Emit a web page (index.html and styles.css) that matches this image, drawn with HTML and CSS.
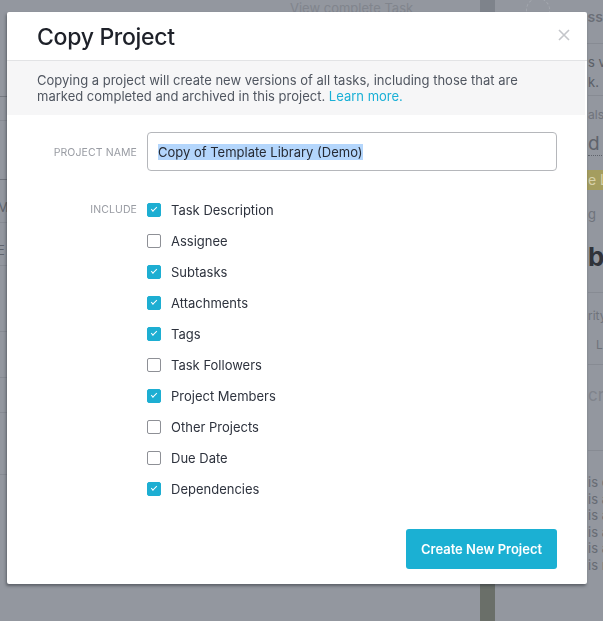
FILE: index.html
```html
<!DOCTYPE html>
<html lang="en">
<head>
    <meta charset="UTF-8">
    <meta name="viewport" content="width=device-width, initial-scale=1.0">
    <title>Copy Project</title>
    <link rel="stylesheet" href="styles.css">
</head>
<body>
    <div class="app">
        <div class="main">
            <div class="topbar"><span class="topbar_text">View complete Task</span></div>
            <div class="row row-a"></div>
            <div class="row row-b"></div>
            <div class="row row-c"><span>M</span></div>
            <div class="row row-d"><span>E</span></div>
            <div class="row row-e"></div>
            <div class="row row-f"></div>
            <div class="row row-g"></div>
            <div class="row row-h"></div>
        </div>
        <div class="strip"></div>
        <div class="side">
            <div class="side_block side_top"><span class="side_avatar"></span><span>ss</span></div>
            <div class="side_block side_desc">s v<br>k.</div>
            <div class="side_block side_als">als</div>
            <div class="side_block side_due"><span>d n</span></div>
            <div class="side_block side_tag">e L</div>
            <div class="side_block side_g">g</div>
            <div class="side_block side_big">b</div>
            <div class="side_block side_prio">rity<br><span>L</span></div>
            <div class="side_block side_crit">cri</div>
            <div class="side_block side_list">is c<br>is a<br>is a<br>is a<br>is a<br>is n</div>
        </div>
    </div>

    <div class="overlay">
        <div class="modal">
            <div class="modal_header">
                <h1 class="modal_title">Copy Project</h1>
                <svg class="modal_close" width="12" height="12" viewBox="0 0 12 12">
                    <path d="M1 1 L11 11 M11 1 L1 11" stroke="#c4c6ca" stroke-width="1.6" fill="none"/>
                </svg>
            </div>
            <div class="modal_info">
                Copying a project will create new versions of all tasks, including those that are
                marked completed and archived in this project. <a class="learn-more" href="#">Learn more.</a>
            </div>
            <div class="form">
                <div class="form_row">
                    <div class="form_label form_label-name">PROJECT NAME</div>
                    <div class="name-input"><span class="name-input_selected">Copy of Template Library (Demo)</span></div>
                </div>
                <div class="form_row form_row-include">
                    <div class="form_label form_label-include">INCLUDE</div>
                    <ul class="options">
                        <li class="option"><span class="check checked"></span>Task Description</li>
                        <li class="option"><span class="check"></span>Assignee</li>
                        <li class="option"><span class="check checked"></span>Subtasks</li>
                        <li class="option"><span class="check checked"></span>Attachments</li>
                        <li class="option"><span class="check checked"></span>Tags</li>
                        <li class="option"><span class="check"></span>Task Followers</li>
                        <li class="option"><span class="check checked"></span>Project Members</li>
                        <li class="option"><span class="check"></span>Other Projects</li>
                        <li class="option"><span class="check"></span>Due Date</li>
                        <li class="option"><span class="check checked"></span>Dependencies</li>
                    </ul>
                </div>
            </div>
            <div class="modal_footer">
                <button class="create_btn">Create New Project</button>
            </div>
        </div>
    </div>
</body>
</html>
```
FILE: styles.css
```css
        body {
            margin: 0;
            background-color: #93979f;
            font-family: Inter, "Liberation Sans", sans-serif;
            overflow: hidden;
        }
        .app {
            display: flex;
            height: 621px;
            color: #6b6f77;
        }
        .main {
            flex: 1;
        }
        .topbar {
            height: 96px;
            padding-left: 290px;
            font-size: 13px;
            line-height: 16px;
            color: #81858d;
            overflow: hidden;
            border-bottom: 1px solid #767a82;
        }
        .row {
            border-bottom: 1px solid #878b93;
            font-size: 13px;
            color: #60646c;
        }
        .row-a { height: 23px; }
        .row-b { height: 58px; border-bottom-color: #6f737b; }
        .row-c { height: 42px; }
        .row-c span, .row-d span { display: block; margin-left: -3px; padding-top: 19px; }
        .row-d { height: 42px; }
        .row-e { height: 65px; }
        .row-f { height: 45px; }
        .row-g { height: 34px; }
        .row-h { height: 61px; }
        .strip {
            width: 15px;
            background: linear-gradient(#7e838b 0, #7e838b 12px, #8e9299 12px, #8e9299 580px, #6a6f69 580px);
        }
        .side {
            width: 108px;
            padding-left: 93px;
            box-sizing: border-box;
            overflow: hidden;
            white-space: nowrap;
            font-size: 13px;
        }
        .side_block {
            border-bottom: 1px solid transparent;
        }
        .side_top {
            height: 43px;
            margin-left: -93px;
            padding-left: 31px;
            display: flex;
            align-items: flex-start;
            font-weight: 600;
            font-size: 14px;
            line-height: 18px;
            border-bottom-color: #878b93;
        }
        .side_avatar {
            width: 22px;
            height: 22px;
            margin-top: -2px;
            border: 1px dashed #a3a7ae;
            border-radius: 50%;
            margin-right: 38px;
        }
        .side_top span:last-child {
            padding-top: 8px;
        }
        .side_desc {
            height: 43px;
            padding-top: 8px;
            line-height: 20px;
            color: #5a5e66;
            border-bottom-color: #878b93;
        }
        .side_als {
            height: 20px;
            padding-top: 12px;
            line-height: 14px;
            font-size: 12px;
            color: #6f737b;
        }
        .side_due {
            height: 28px;
            padding-top: 4px;
            font-size: 19px;
            line-height: 22px;
            color: #5f636b;
        }
        .side_due span {
            border-bottom: 1px dotted #5f636b;
        }
        .side_tag {
            height: 19px;
            margin-top: 8px;
            margin-left: -5px;
            padding-left: 5px;
            line-height: 19px;
            background-color: #a49d5f;
            color: #d7d1a9;
            font-size: 14px;
        }
        .side_g {
            height: 29px;
            padding-top: 14px;
            line-height: 20px;
            color: #6f737b;
        }
        .side_big {
            height: 50px;
            padding-top: 8px;
            font-size: 26px;
            line-height: 30px;
            font-weight: 700;
            color: #30333a;
            border-bottom-color: #878b93;
        }
        .side_prio {
            height: 63px;
            padding-top: 8px;
            line-height: 29px;
            font-size: 12px;
            color: #6f737b;
            border-bottom-color: #878b93;
        }
        .side_prio span { padding-left: 8px; }
        .side_crit {
            height: 67px;
            padding-top: 18px;
            font-size: 17px;
            line-height: 24px;
            color: #80848c;
            border-bottom-color: #878b93;
        }
        .side_list {
            padding-top: 23px;
            line-height: 16.6px;
            color: #676b73;
        }
        .overlay {
            position: fixed;
            top: 0;
            left: 0;
            right: 0;
            bottom: 0;
        }
        .modal {
            margin: 12px 0 0 7px;
            width: 580px;
            height: 572px;
            background-color: #fff;
            border-radius: 2px;
            box-shadow: -1px 2px 3px rgba(40, 44, 52, 0.5);
            display: flex;
            flex-direction: column;
        }
        .modal_header {
            height: 48px;
            border-bottom: 1px solid #e2e3e5;
            display: flex;
            justify-content: space-between;
            align-items: flex-start;
            padding: 0 17px 0 30px;
        }
        .modal_title {
            margin: 0;
            padding-top: 11px;
            font-size: 23px;
            font-weight: 500;
            letter-spacing: -0.3px;
            color: #1e2129;
        }
        .modal_close {
            margin-top: 17px;
        }
        .modal_info {
            background-color: #f6f6f7;
            margin-right: 2px;
            padding: 11px 30px 9px 30px;
            height: 34px;
            font-size: 13px;
            line-height: 16px;
            color: #505660;
        }
        .learn-more {
            color: #1ab0d6;
            text-decoration: none;
        }
        .form {
            padding: 17px 30px 0 0;
            flex: 1;
        }
        .form_row {
            display: flex;
        }
        .form_label {
            width: 140px;
            flex-shrink: 0;
            box-sizing: border-box;
            padding-right: 10px;
            text-align: right;
            font-size: 10.5px;
            letter-spacing: 0.1px;
            color: #999ca3;
        }
        .form_label-name {
            padding-top: 14px;
        }
        .form_label-include {
            padding-top: 2px;
        }
        .name-input {
            flex: 1;
            height: 39px;
            box-sizing: border-box;
            border: 1px solid #b5b7bb;
            border-radius: 4px;
            padding: 11px 10px 0 10px;
            font-size: 13px;
            line-height: 16px;
            color: #262a33;
        }
        .name-input_selected {
            background-color: #b4d6fc;
        }
        .form_row-include {
            margin-top: 30px;
        }
        .options {
            list-style: none;
            margin: 0;
            padding: 0;
        }
        .option {
            display: flex;
            align-items: center;
            height: 18px;
            margin-bottom: 13px;
            font-size: 13px;
            color: #2d323d;
        }
        .check {
            width: 14px;
            height: 14px;
            box-sizing: border-box;
            border: 1px solid #8e9096;
            border-radius: 2px;
            margin-right: 10px;
            position: relative;
        }
        .check.checked {
            background-color: #1daed2;
            border-color: #1daed2;
        }
        .check.checked::after {
            content: "";
            position: absolute;
            left: 3px;
            top: 3px;
            width: 5px;
            height: 2px;
            border-left: 1.5px solid #fff;
            border-bottom: 1.5px solid #fff;
            transform: rotate(-45deg);
        }
        .modal_footer {
            display: flex;
            justify-content: flex-end;
            padding: 0 30px 15px 0;
        }
        .create_btn {
            width: 151px;
            height: 40px;
            border: none;
            border-radius: 3px;
            background-color: #1bb0d3;
            color: #fff;
            font-family: Inter, "Liberation Sans", sans-serif;
            font-size: 13px;
            font-weight: 600;
        }
```
